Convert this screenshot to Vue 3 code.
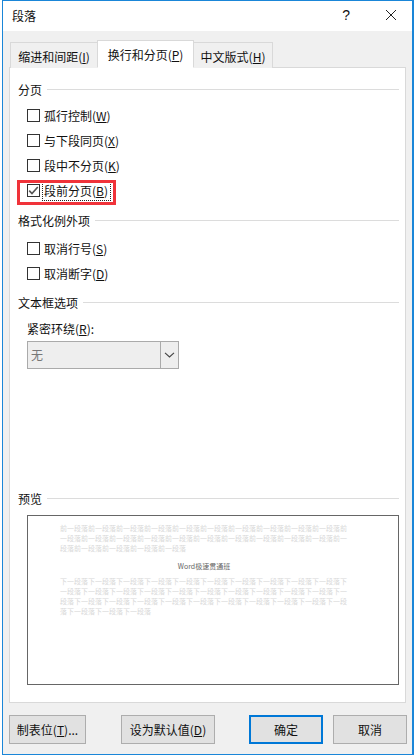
<script setup>
const pre = '前一段落'.repeat(25)
const next = '下一段落'.repeat(34)
const group1 = [
  { label: '孤行控制', key: 'W' },
  { label: '与下段同页', key: 'X' },
  { label: '段中不分页', key: 'K' }
]
const group2 = [
  { label: '取消行号', key: 'S' },
  { label: '取消断字', key: 'D' }
]
</script>

<template>
  <div class="window">
    <header class="titlebar">
      <span class="title">段落</span>
      <span class="help">?</span>
      <svg class="close" width="12" height="12" viewBox="0 0 12 12"><path d="M1 1 L11 11 M11 1 L1 11" stroke="#222" stroke-width="1" fill="none" /></svg>
    </header>
    <div class="body">
      <nav class="tabs">
        <div class="tab first">缩进和间距(<u>I</u>)</div>
        <div class="tab active">换行和分页(<u>P</u>)</div>
        <div class="tab last">中文版式(<u>H</u>)</div>
      </nav>
      <main class="panel">
        <div class="legend"><span>分页</span><i></i></div>
        <div class="opts">
          <label v-for="o in group1" :key="o.key" class="opt"><span class="box"></span><span>{{ o.label }}(<u>{{ o.key }}</u>)</span></label>
          <label class="opt marked">
            <span class="box">
              <svg width="13" height="13" viewBox="0 0 13 13"><path d="M2.2 6.6 L5 9.6 L10.8 3" stroke="#555" stroke-width="1.6" fill="none" /></svg>
            </span>
            <span class="focus">段前分页(<u>B</u>)</span>
          </label>
        </div>
        <div class="legend second"><span>格式化例外项</span><i></i></div>
        <div class="opts two">
          <label v-for="o in group2" :key="o.key" class="opt"><span class="box"></span><span>{{ o.label }}(<u>{{ o.key }}</u>)</span></label>
        </div>
        <div class="legend third"><span>文本框选项</span><i></i></div>
        <div class="field">
          <div class="field-label">紧密环绕(<u>R</u>):</div>
          <div class="select">
            <span class="value">无</span>
            <span class="arrow"><svg width="11" height="6" viewBox="0 0 11 6"><path d="M1 0.8 L5.5 5 L10 0.8" stroke="#444" stroke-width="1.1" fill="none" /></svg></span>
          </div>
        </div>
        <div class="legend fourth"><span>预览</span><i></i></div>
        <div class="preview">
          <p class="sample">{{ pre }}</p>
          <p class="current">Word极速贯通班</p>
          <p class="sample">{{ next }}</p>
        </div>
      </main>
      <footer class="actions">
        <button class="btn tabstop">制表位(<u>T</u>)...</button>
        <button class="btn default">设为默认值(<u>D</u>)</button>
        <button class="btn ok">确定</button>
        <button class="btn cancel">取消</button>
      </footer>
    </div>
  </div>
</template>

<style scoped>
.window {
  width: 412px;
  height: 755px;
  margin-left: 2px;
  box-sizing: border-box;
  border: 1px solid #1a86d8;
  border-right-width: 2px;
  background: #f0f0f0;
  font-family: "Noto Sans CJK SC", "Liberation Sans", sans-serif;
  font-size: 12px;
  color: #111;
  display: flex;
  flex-direction: column;
}
u { text-underline-offset: 1px; }
.titlebar {
  box-sizing: border-box;
  height: 30px;
  background: #fff;
  display: flex;
  align-items: center;
  padding: 0 0 2px 9px;
  flex: none;
}
.title { font-size: 12px; flex: 1; }
.help { font-family: "Liberation Sans", sans-serif; font-size: 14px; margin-right: 35px; }
.close { margin-right: 15px; }
.body { flex: 1; padding: 10px 6px 0; display: flex; flex-direction: column; min-height: 0; }
.tabs { display: flex; align-items: flex-end; height: 27px; padding-left: 1px; position: relative; z-index: 1; margin-bottom: -1px; flex: none; }
.tab {
  box-sizing: border-box;
  height: 26px;
  border: 1px solid #d9d9d9;
  border-bottom: none;
  text-align: center;
  line-height: 27px;
  background: #f0f0f0;
}
.first { width: 87px; border-right: none; }
.active { width: 97px; height: 28px; background: #fff; line-height: 28px; border-bottom: 1px solid #fff; }
.last { width: 79px; border-left: none; }
.panel {
  box-sizing: border-box;
  height: 636px;
  background: #fff;
  border: 1px solid #d9d9d9;
  padding: 0 6px 0 8px;
  flex: none;
}
.legend { display: flex; align-items: center; gap: 5px; height: 18px; margin-top: 12px; }
.legend i { flex: 1; height: 1px; background: #dcdcdc; }
.second { margin-top: 8px; }
.third { margin-top: 7px; }
.fourth { margin-top: 120px; }
.opts { padding: 5px 0 0 9px; display: flex; flex-direction: column; }
.two { padding-top: 7px; }
.opt { display: flex; align-items: center; gap: 4px; height: 25px; }
.box {
  box-sizing: border-box;
  width: 13px;
  height: 13px;
  border: 1px solid #333;
  background: #fff;
  display: block;
  flex: none;
  position: relative;
}
.box svg { position: absolute; left: -1px; top: -1px; }
.focus { outline: 1px dotted #222; margin-left: -1px; padding: 0 2px 0 1px; line-height: 19px; }
.marked { position: relative; }
.marked::after {
  content: "";
  position: absolute;
  left: -10px;
  top: 2px;
  width: 99px;
  height: 25px;
  box-sizing: border-box;
  border: 3px solid #f0333a;
  pointer-events: none;
}
.field { padding: 8px 0 0 9px; }
.field-label { height: 20px; line-height: 20px; }
.select {
  box-sizing: border-box;
  width: 152px;
  height: 28px;
  border: 1px solid #aaa;
  background: #eee;
  display: flex;
  align-items: stretch;
  margin-top: 2px;
}
.value { flex: 1; padding-left: 3px; line-height: 26px; color: #777; }
.arrow { width: 17px; border-left: 1px solid #aaa; background: #eee; display: flex; align-items: center; justify-content: center; }
.preview {
  box-sizing: border-box;
  margin: 8px 0 0 9px;
  height: 170px;
  border: 1px solid #666;
  background: #fff;
  padding: 7px 50px 0 32px;
  overflow: hidden;
}
.sample { margin: 0; font-size: 7px; line-height: 10px; color: #d8d8d8; word-break: break-all; }
.current { margin: 8px 0 5px; font-size: 7px; line-height: 10px; color: #666; text-align: center; }
.actions { display: flex; padding-top: 12px; flex: none; }
.btn {
  box-sizing: border-box;
  height: 29px;
  border: 1px solid #adadad;
  background: #e1e1e1;
  font: inherit;
  color: #111;
  padding: 0;
  flex: none;
}
.tabstop { width: 77px; }
.default { width: 94px; margin-left: 35px; }
.ok { width: 74px; margin-left: 34px; border: 2px solid #0078d7; }
.cancel { width: 74px; margin-left: 10px; }
</style>

<style>
html, body { margin: 0; background: #fff; }
</style>
